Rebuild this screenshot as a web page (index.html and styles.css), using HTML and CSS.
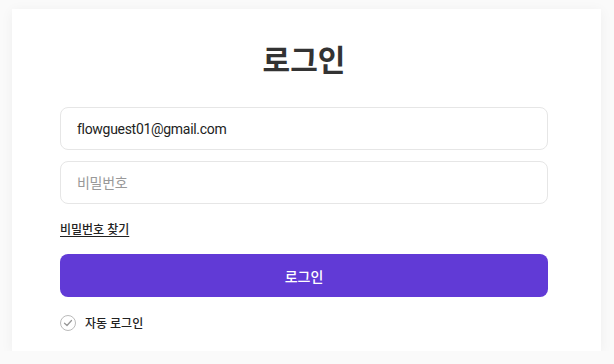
FILE: index.html
```html
<!DOCTYPE html>
<html lang="ko">
<head>
  <meta charset="UTF-8" />
  <meta name="viewport" content="width=device-width, initial-scale=1.0"/>
  <title>로그인</title>
  <link rel="stylesheet" href="styles.css">
</head>
<body>

  <div class="login-card">
    <h1>로그인</h1>

    <form class="login-form">
      <input type="email" class="field" value="flowguest01@gmail.com">
      <input type="password" class="field" placeholder="비밀번호">

      <a href="#" class="find-link">비밀번호 찾기</a>

      <button type="button" class="btn-login">로그인</button>

      <label class="auto-login">
        <span class="check-circle">
          <svg width="10" height="8" viewBox="0 0 10 8">
            <path d="M1.5 4.2 L4 6.5 L8.5 1.5" fill="none" stroke="#999" stroke-width="1.3" stroke-linecap="round" stroke-linejoin="round"/>
          </svg>
        </span>
        자동 로그인
      </label>
    </form>
  </div>

</body>
</html>
```

FILE: styles.css
```css
body {
  margin: 0;
  font-family: Roboto, "Noto Sans CJK KR", sans-serif;
  background-color: #fafafa;
  color: #222;
}
.login-card {
  width: 488px;
  margin: 9px 0 0 12px;
  background-color: white;
  padding: 30px 53px 20px 48px;
  box-shadow: 0 2px 12px rgba(0,0,0,0.05);
}
h1 {
  margin: 0 0 24px;
  text-align: center;
  font-size: 30px;
  font-weight: 700;
  line-height: 44px;
  color: #333;
}
.login-form {
  display: flex;
  flex-direction: column;
}
.field {
  height: 43px;
  box-sizing: border-box;
  border: 1px solid #e6e6e6;
  border-radius: 8px;
  padding: 0 16px;
  font-family: inherit;
  font-size: 14px;
  letter-spacing: -0.3px;
  color: #222;
  margin-bottom: 11px;
  outline: none;
}
.field::placeholder {
  color: #999;
}
.find-link {
  align-self: flex-start;
  margin-top: 5px;
  font-size: 12px;
  font-weight: 500;
  color: #222;
  text-decoration: underline;
  text-underline-offset: 2px;
}
.btn-login {
  margin-top: 17px;
  height: 43px;
  border: none;
  border-radius: 8px;
  background-color: #613ad6;
  color: white;
  font-family: inherit;
  font-size: 14px;
  font-weight: 500;
  cursor: pointer;
}
.auto-login {
  display: flex;
  align-items: center;
  gap: 9px;
  margin-top: 17px;
  font-size: 12px;
  font-weight: 500;
  color: #222;
}
.check-circle {
  width: 14px;
  height: 14px;
  border: 1px solid #bbb;
  border-radius: 50%;
  display: flex;
  align-items: center;
  justify-content: center;
}
```
